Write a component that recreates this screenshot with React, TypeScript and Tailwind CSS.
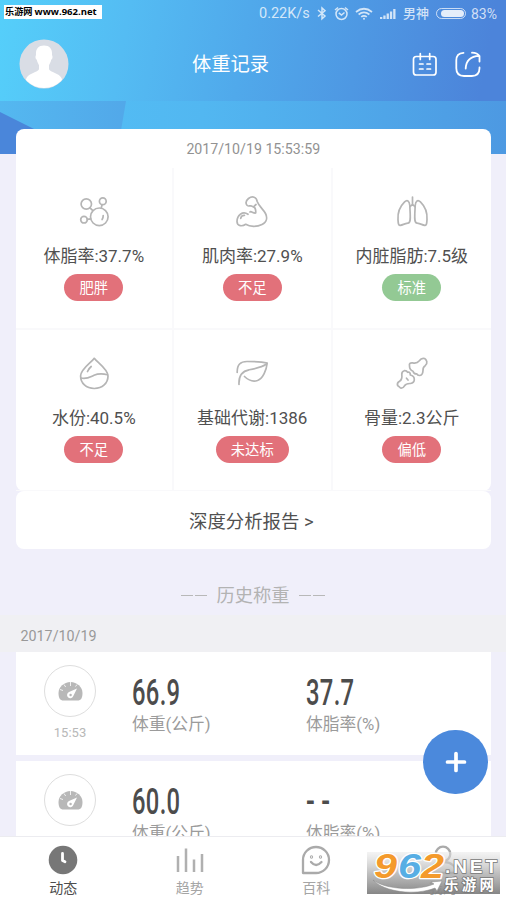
import React from "react";

const stroke = { fill: "none", stroke: "#b5b5b5", strokeWidth: 1.7, strokeLinecap: "round", strokeLinejoin: "round" } as const;

const FatIcon = () => (
  <svg className="h-9 w-9" viewBox="76 194 36 36" {...stroke}>
    <circle cx="86.3" cy="204" r="5.2" />
    <circle cx="102.8" cy="201.2" r="3.4" />
    <circle cx="84" cy="219.7" r="3.3" />
    <circle cx="99.3" cy="216.8" r="8.8" />
    <path d="M90 207.8l2.6 2.6M102 204.8l-.7 3.2M87.4 219.3l3.200-.5M103.2 215.5q.1 2.200-1.100 4" />
  </svg>
);

const MuscleIcon = () => (
  <svg className="h-9 w-9" viewBox="235 194 36 36" {...stroke}>
    <path d="M249 214.300C243.500 210.500 238 215.500 238 221.500C238 226.500 243.500 226.500 246.700 224.300C251 227 258 227 263 224.500C268 222 268.500 217.500 266.500 213.500C264.500 209.500 260 206.500 258.200 201.500C257.500 197 253.500 195.500 249.500 198.500C246.500 201 246.500 203 247.800 205C249 207.500 251.500 204.500 253.500 206.500C256 207 257 209 256.700 213C254 213.500 252 210.500 251 212" />
    <path d="M241.700 218.500C242 216.300 243.500 215.200 245.500 215.300M257 204.500L254.500 206.800" />
  </svg>
);

const LungIcon = () => (
  <svg className="h-9 w-9" viewBox="393 194 36 36" {...stroke}>
    <path d="M411.500 197v7.300l-2.500 2.400M411.500 204.300l2.500 2.400" />
    <path d="M408.800 205.500c-.4-5-2.700-6-5.200-3.600-4.700 4.600-7 11.500-6.600 17.700.2 3 .2 6.300 2.300 5.800 3-.6 4-1.800 7.600-2.200 2.700-.3 2.500-5 2.300-9.500z" />
    <path d="M414.200 205.500c.4-5 2.700-6 5.200-3.600 4.700 4.600 7 11.500 6.600 17.700-.2 3-.2 6.300-2.300 5.800-3-.6-4-1.800-7.600-2.200-2.700-.3-2.500-5-2.300-9.500z" />
  </svg>
);

const WaterIcon = () => (
  <svg className="h-9 w-9" viewBox="76 356 36 36" {...stroke}>
    <path d="M94.300 358.300c-3 4.200-13.700 10.800-13.700 17.700 0 7.200 5.600 12.500 13.700 12.500s13.700-5.300 13.700-12.500c0-6.900-10.700-13.500-13.700-17.700z" />
    <path d="M81 378c6 1.400 9-1 13-2.800 4-1.700 9.500-1.500 13.500-.5M87.500 371.500q1-2.700 3.700-5" />
  </svg>
);

const LeafIcon = () => (
  <svg className="h-9 w-9" viewBox="235 356 36 36" {...stroke}>
    <path d="M238.200 372.500C238 364.500 241.500 361.500 248 361.500C255 361.500 262 361.500 268.200 363C267.500 370 264 378.500 258.500 380.500C254 382 249.500 380.300 245.500 376.500" />
    <path d="M240 384.500C239.500 375 243.500 371 250 369.800C257 368.500 262.500 367.500 267.500 364" />
  </svg>
);

const BoneIcon = () => (
  <svg className="h-9 w-9" viewBox="393 356 36 36" {...stroke}>
    <path d="M408.500 366Q407.800 362.500 411.700 362.900Q416 363.800 418.300 360.800Q420.500 357.500 423.600 358.500Q425 359.300 425.800 361.500Q426.300 364 424.200 365.700Q421.800 367.200 422 370.500Q421.800 375.500 418.300 375.500Q416.500 375.500 415.800 373.900Q413 374.300 412 371.200Q408.500 370 408.500 366z" />
    <path d="M400.800 374.500Q400.500 371.500 403.300 370.700Q405.800 370.500 406.500 372.300Q409.500 371.500 409.300 375Q413.300 375.800 413.300 379.500Q413.300 382.800 409.500 383.500Q405 383.300 403.500 385.800Q402 388.500 399.500 388Q398 386.500 396.600 385.500Q395.700 382.800 398.500 381.300Q401.500 379.500 400.800 374.500zM405.500 378.200L407 380" />
  </svg>
);

type Metric = { icon: React.ReactNode; label: string; tag: string; good?: boolean };
const metrics: Metric[] = [
  { icon: <FatIcon />, label: "体脂率:37.7%", tag: "肥胖" },
  { icon: <MuscleIcon />, label: "肌肉率:27.9%", tag: "不足" },
  { icon: <LungIcon />, label: "内脏脂肪:7.5级", tag: "标准", good: true },
  { icon: <WaterIcon />, label: "水份:40.5%", tag: "不足" },
  { icon: <LeafIcon />, label: "基础代谢:1386", tag: "未达标" },
  { icon: <BoneIcon />, label: "骨量:2.3公斤", tag: "偏低" },
];

function StatusBar() {
  return (
    <div className="flex h-[27px] items-center pl-[259px] text-[14px] leading-none text-white/75">
      <span className="w-[57px] pt-[2px] text-[14.500px] whitespace-nowrap">0.22K/s</span>
      <svg className="h-4 w-3" viewBox="0 0 12 16" fill="none" stroke="currentColor" strokeWidth="1.500">
        <path d="M2 4l7 6L6 12.800V2l3 2.800L2 10.500" />
      </svg>
      <svg className="ml-[6px] h-4 w-4" viewBox="0 0 16 16" fill="none" stroke="currentColor" strokeWidth="1.500">
        <circle cx="7.500" cy="8" r="5.500" />
        <path d="M1 4l3-2.500M14 4l-3-2.500M4.800 6.800L7.500 9l3-2.500" />
      </svg>
      <svg className="ml-[5px] h-4 w-[18px]" viewBox="0 0 18 16" fill="none" stroke="currentColor" strokeWidth="1.700">
        <path d="M1 6q8-6.500 16 0M3.600 8.500q5.400-4.300 10.800 0M6.200 10.900q2.800-2.200 5.600 0" />
        <circle cx="9" cy="12.800" r="1" fill="currentColor" stroke="none" />
      </svg>
      <svg className="ml-[7px] h-4 w-4" viewBox="0 0 16 16" fill="currentColor">
        <path d="M0 13h2.300v-2H0zM3.300 13h2.300v-3.500H3.300zM6.600 13h2.300V7.500H6.600zM9.900 13h2.300V5.500H9.900zM13.200 13h2.300V3h-2.300z" />
      </svg>
      <span className="ml-[7px] w-[26px] text-[13px] font-medium whitespace-nowrap">男神</span>
      <span className="ml-[7px] flex h-[11px] w-[30px] justify-end rounded-full border border-white/70 p-px">
        <span className="w-[23px] rounded-full bg-white/85" />
      </span>
      <span className="ml-[5px] pt-px text-[14px]">83%</span>
    </div>
  );
}

function Header() {
  return (
    <header className="relative h-[101px] shrink-0 bg-[linear-gradient(100deg,#55cffa_0%,#54bcf3_25%,#50a9eb_48%,#4e98e3_70%,#4c84da_95%)]">
      <StatusBar />
      <div className="flex h-[74px] items-center">
        <svg className="mb-px ml-[19px] h-[50px] w-[50px]" viewBox="0 0 50 50">
          <defs>
            <clipPath id="avatar"><circle cx="25" cy="25" r="24" /></clipPath>
          </defs>
          <circle cx="25" cy="25" r="24.500" fill="#d9dde5" />
          <path clipPath="url(#avatar)" fill="#fff" d="M25 6.500c6 0 8.500 4 8 9.500 1 1.500.5 4-.8 4.700-.6 3-1.700 4-2.200 5.500v4c1 3 10.500 4 12.500 8.800 1 2.500 1.500 6 1.500 12H6c0-6 .5-9.500 1.500-12 2-4.800 11.500-5.800 12.500-8.800v-4c-.5-1.500-1.600-2.500-2.200-5.500-1.300-.7-1.800-3.200-.8-4.700-.5-5.500 2-9.500 8-9.500z" />
        </svg>
        <h1 className="mt-[2px] ml-[123px] w-[78px] text-[19.300px] leading-none whitespace-nowrap text-white">体重记录</h1>
        <svg className="mb-px ml-[141px] h-7 w-7" viewBox="411 49 28 28" fill="none" stroke="#fff" strokeWidth="1.700" strokeLinecap="round">
          <rect x="413.500" y="55.500" width="22.500" height="18.500" rx="2.800" />
          <path d="M420.300 52.500v6M429.700 52.500v6M419.500 63h3.500M427 63h3.500M419.500 68h3.500M427 68h3.500" />
        </svg>
        <svg className="mb-px ml-[15px] h-7 w-7" viewBox="454.500 49 28 28" fill="none" stroke="#fff" strokeWidth="1.800" strokeLinecap="round" strokeLinejoin="round">
          <path d="M464 51.800c-4.500.3-7.200 3.300-7.200 7.500v8c0 5 3 7.700 7.700 7.700h7.800c5 0 7.700-2.700 7.700-7.700v-.8" />
          <path d="M466.200 67.500c.3-7.500 4.500-12.300 13.500-12.700M472.500 51.700c3.500.2 6 1.300 7.500 3.300v5.500" />
        </svg>
      </div>
    </header>
  );
}

function RecordCard({ weight, fat, time }: { weight: string; fat: string; time: string }) {
  return (
    <div className="mr-[15px] ml-4 flex h-[103px] shrink-0 bg-white">
      <div className="flex w-[108px] flex-col items-center pt-[13px]">
        <div className="flex h-[52px] w-[52px] items-center justify-center rounded-full border border-[#dedede]">
          <svg className="h-5 w-[25px]" viewBox="0 0 25 20">
            <path d="M12.500 1C6 1 .5 6 .5 12c0 5 1.500 7.500 5 7.500h14c3.500 0 5-2.500 5-7.500 0-6-5.500-11-12-11z" fill="#b8b8b8" />
            <path d="M12.500 1v4M6 3.500l1.700 2.500M19 3.500l-1.500 2M2 8.500l3 1" stroke="#fff" strokeWidth=".8" />
            <path d="M19 7.500l-3.800 7.800a3.200 3.200 0 1 1-4.200-4.200z" fill="#fff" />
            <circle cx="12.600" cy="14" r="1.200" fill="#b8b8b8" />
          </svg>
        </div>
        <span className="mt-[8px] text-[13px] leading-[15px] text-[#b8b8b8]">{time}</span>
      </div>
      <div className="w-[174px] pl-[8px]">
        <Value text={weight} />
        <div className="mt-[5px] text-[16.800px] leading-5 text-[#9b9b9b]">体重(公斤)</div>
      </div>
      <div className="pl-[8px]">
        <Value text={fat} />
        <div className="mt-[5px] text-[16.800px] leading-5 text-[#9b9b9b]">体脂率(%)</div>
      </div>
    </div>
  );
}

function Value({ text }: { text: string }) {
  const empty = text === "- -";
  return (
    <div
      className={`mt-[23px] h-[34px] w-[72px] origin-left text-[36px] leading-[36px] font-medium whitespace-nowrap text-[#4c4c4c] ${empty ? "scale-x-[0.72]" : "scale-x-[0.66] tracking-[0.500px]"}`}
    >
      {text}
    </div>
  );
}

function BottomNav() {
  return (
    <nav className="relative grid h-16 shrink-0 grid-cols-4 border-t border-[#ececf0] bg-white text-[14px] leading-[16px] text-[#a5a5a5]">
      <div className="flex flex-col items-center pt-2 text-[#4d4d4d]">
        <svg className="h-[30px] w-[30px]" viewBox="0 0 30 30">
          <circle cx="15" cy="15" r="14.300" fill="#777" />
          <path d="M14.500 8.500v7l2.500 1.200" fill="none" stroke="#fff" strokeWidth="2.800" strokeLinecap="round" strokeLinejoin="round" />
        </svg>
        <span className="mt-[5px]">动态</span>
      </div>
      <div className="flex flex-col items-center pt-2">
        <svg className="h-[30px] w-[30px]" viewBox="0 0 30 30" stroke="#b0b0b0" strokeWidth="2.500">
          <path d="M3 11v16M11 3.500V27M19 14.500V27M27 9v18" />
        </svg>
        <span className="mt-[5px]">趋势</span>
      </div>
      <div className="flex flex-col items-center pt-2">
        <svg className="h-[30px] w-[30px]" viewBox="0 0 30 30" fill="none" stroke="#aaa" strokeWidth="2.300" strokeLinecap="round" strokeLinejoin="round">
          <path d="M2 28V15a13 13 0 1 1 13 13z" />
          <path d="M10 17q5 6 10.500 0" />
          <circle cx="10.500" cy="12" r=".5" /><circle cx="19.500" cy="12" r=".5" />
        </svg>
        <span className="mt-[5px]">百科</span>
      </div>
      <div className="flex flex-col items-center pt-2">
        <svg className="h-[30px] w-[30px]" viewBox="0 0 30 30" fill="none" stroke="#aaa" strokeWidth="2.300">
          <circle cx="15" cy="9" r="7.300" />
          <path d="M2 28c0-7 5-11 13-11s13 4 13 11z" />
        </svg>
        <span className="mt-[5px]">我的</span>
      </div>
      <Watermark />
    </nav>
  );
}

function Watermark() {
  return (
    <svg className="absolute top-[15px] left-[367px] h-[42px] w-[133px] overflow-visible" viewBox="0 0 133 42">
      <defs>
        <linearGradient id="shade" x1="0" y1="0" x2="0" y2="1">
          <stop offset="0" stopColor="#e8e8e8" stopOpacity=".5" />
          <stop offset=".5" stopColor="#b0b0b0" stopOpacity=".8" />
          <stop offset="1" stopColor="#7d7d7d" stopOpacity=".93" />
        </linearGradient>
      </defs>
      <rect width="133" height="42" fill="url(#shade)" />
      <path d="M6 28c13 10 45 11 61 4l-3-2 11-1-5 10-2-3c-20 8-51 4-62-8z" fill="#fff" stroke="#888" strokeWidth=".5" />
      <g fontFamily="'Liberation Sans', sans-serif" fontWeight="700" fontStyle="italic" fontSize="35" stroke="#fff" strokeWidth="2.500" paintOrder="stroke" strokeLinejoin="round">
        <text x="7" y="26" fill="#f49a2c" textLength="23" lengthAdjust="spacingAndGlyphs">9</text>
        <text x="31" y="26" fill="#57aee4" textLength="23" lengthAdjust="spacingAndGlyphs">6</text>
        <text x="54" y="26" fill="#f49a2c" textLength="23" lengthAdjust="spacingAndGlyphs">2</text>
      </g>
      <g fill="#fff" stroke="#777" strokeWidth="1.500" paintOrder="stroke" fontWeight="700">
        <text x="78" y="20.500" fontFamily="'Liberation Sans', sans-serif" fontSize="19" textLength="52">.NET</text>
        <text x="77" y="37.500" fontFamily="'Noto Sans CJK SC', sans-serif" fontSize="14.500" textLength="50">乐游网</text>
      </g>
    </svg>
  );
}

const Dashes = () => (
  <span className="flex gap-[2px]"><i className="h-px w-3 bg-[#b8b8b8]" /><i className="h-px w-3 bg-[#b8b8b8]" /></span>
);

export default function App() {
  return (
    <div className="relative flex h-[900px] w-[506px] flex-col overflow-hidden bg-[#f0effa] font-[Roboto,'Noto_Sans_CJK_SC',sans-serif]">
      <Header />
      <main className="relative flex min-h-0 flex-1 flex-col overflow-hidden">
        <svg className="absolute top-0 left-0 h-[53px] w-[506px]" viewBox="0 0 506 53">
          <defs>
            <linearGradient id="facetLeft"><stop stopColor="#54b8f0" /><stop offset="1" stopColor="#52a8e9" /></linearGradient>
            <linearGradient id="facetRight"><stop stopColor="#53c1f6" /><stop offset=".4" stopColor="#52b7f1" /><stop offset="1" stopColor="#4d99e2" /></linearGradient>
          </defs>
          <rect width="506" height="53" fill="url(#facetRight)" />
          <path d="M0 0h126l-9 53H0z" fill="url(#facetLeft)" />
          <path d="M0 11l84 42H0z" fill="#4a86da" />
        </svg>
        <section className="relative mt-7 mr-[15px] ml-[15.500px] shrink-0">
          <div className="rounded-lg bg-white">
            <div className="h-[39px] pt-3 text-center text-[14.200px] leading-4 text-[#929292]">2017/10/19 15:53:59</div>
            <div className="grid grid-cols-3">
              {metrics.map((m, i) => (
                <div
                  key={m.label}
                  className={`flex flex-col items-center border-[#f9f9fb] pt-[26px] ${i % 3 < 2 ? "border-r-2" : ""} ${i < 3 ? "h-[162px] border-b-2" : "h-[161px] border-b"}`}
                >
                  {m.icon}
                  <div className="mt-[15.500px] text-[17px] leading-5 whitespace-nowrap text-[#505050]">{m.label}</div>
                  <div className={`mt-[8.500px] flex h-[27px] items-center rounded-full px-[15px] pt-[2px] text-[14.300px] leading-none text-white ${m.good ? "bg-[#93c994]" : "bg-[#e2717a]"}`}>{m.tag}</div>
                </div>
              ))}
            </div>
          </div>
          <button className="flex h-[58px] w-full items-center justify-center rounded-lg bg-white pt-[4px] pr-[4px] text-[18.400px] text-[#505050]">深度分析报告 &gt;</button>
        </section>
        <div className="flex h-[66px] shrink-0 items-center justify-center pt-[26px] text-[18.300px] leading-none text-[#b3b3b3]">
          <Dashes />
          <h2 className="mx-[9.500px] pt-[3px]">历史称重</h2>
          <Dashes />
        </div>
        <div className="h-[37px] shrink-0 bg-[#f0f0f3] pt-[13px] pl-[20.500px] text-[14.300px] leading-[17px] text-[#999]">2017/10/19</div>
        <div className="flex flex-col gap-[6px]">
          <RecordCard weight="66.9" fat="37.7" time="15:53" />
          <RecordCard weight="60.0" fat="- -" time="15:52" />
        </div>
      </main>
      <BottomNav />
      <button className="absolute top-[730px] left-[423px] flex h-16 w-[65px] items-center justify-center rounded-full bg-[#4b89dc]">
        <svg className="h-6 w-6" viewBox="0 0 24 24" stroke="#fff" strokeWidth="3.700" strokeLinecap="round"><path d="M12 3.500v17M3.500 12h17" /></svg>
      </button>
      <div className="absolute top-[5px] left-[4px] flex h-[14px] w-[98px] items-center bg-white pl-px text-[9.200px] leading-none font-bold whitespace-nowrap text-black">
        <span>乐游网</span><span className="ml-[2px] font-['Open_Sans',sans-serif] text-[9.500px]">www.962.net</span>
      </div>
    </div>
  );
}
